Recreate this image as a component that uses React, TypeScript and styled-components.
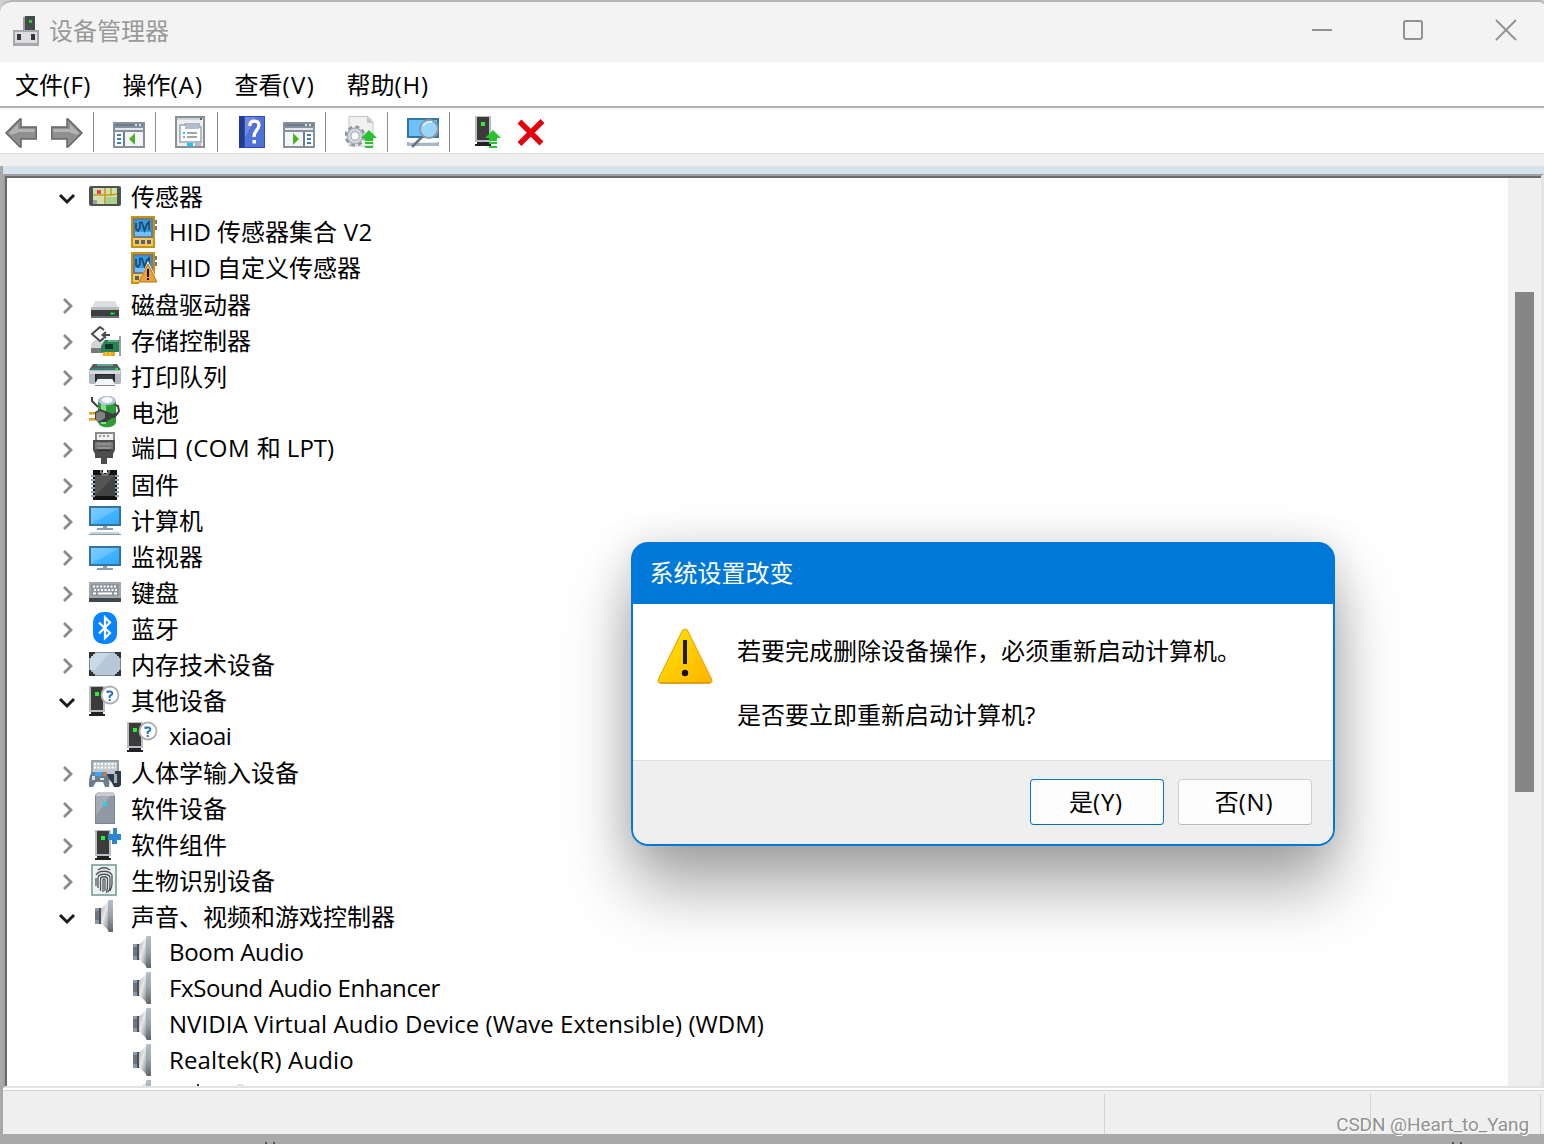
import React from "react";
import styled, { createGlobalStyle } from "styled-components";

const Global = createGlobalStyle`
  * { box-sizing: border-box; }
  html, body { margin: 0; padding: 0; background: #a9a9a9; }
  body {
    width: 1544px; height: 1144px; overflow: hidden;
    font-family: "Open Sans", "Noto Sans CJK SC", sans-serif;
    font-size: 24px; font-weight: 400; color: #000;
  }
  svg { display: block; }
`;

const Screen = styled.div`
  position: relative;
  width: 1544px;
  height: 1144px;
  overflow: hidden;
  background: #d0d0d0;
`;
const Window = styled.div`
  display: flex;
  flex-direction: column;
  height: 1144px;
  border-top: 2px solid #b5b5b5;
  border-radius: 12px 5px 0 0;
  background: #a9a9a9;
  overflow: hidden;
`;
const TitleBar = styled.header`
  display: flex;
  align-items: center;
  height: 60px;
  flex: none;
  padding: 0 27px 3px 10px;
  background: #f3f3f3;
`;
const Title = styled.h1`
  flex: 1;
  margin: 1px 0 0 7px;
  font-size: 24px;
  font-weight: 400;
  line-height: 34px;
  color: #999;
`;
const Controls = styled.div`
  display: flex;
  align-items: center;
  gap: 71px;
  margin-bottom: 1px;
  & > svg:last-child { margin-left: 1px; }
`;
const MenuBar = styled.nav`
  display: flex;
  height: 44px;
  flex: none;
  padding-left: 15px;
  background: #fff;
`;
const MenuItem = styled.div<{ $w: number; $ls: number }>`
  width: ${(p) => p.$w}px;
  line-height: 45px;
  white-space: nowrap;
  & > span { letter-spacing: ${(p) => p.$ls}px; }
`;
const ToolBar = styled.div`
  display: flex;
  align-items: flex-start;
  height: 48px;
  flex: none;
  padding: 8px 0 0 5px;
  border-top: 2px solid #b1b1b1;
  border-bottom: 1px solid #dcdcdc;
  background: linear-gradient(#f3f8fc 2px, #fff 2px);
`;
const Tool = styled.div`
  width: 32px;
  height: 32px;
  & + & { margin-left: 14px; }
`;
const Separator = styled.div`
  width: 1px;
  height: 40px;
  margin: -4px 19px 0 10px;
  background: #8d8d8d;
`;
const Band = styled.div<{ $h: number; $c: string }>`
  flex: none;
  height: ${(p) => p.$h}px;
  background: ${(p) => p.$c};
`;
const Frame = styled.div`
  display: flex;
  flex-direction: column;
  flex: none;
  height: 968px;
  margin-left: 3px;
  background: #fff;
`;
const Pane = styled.main`
  display: flex;
  flex: none;
  height: 914px;
  border: 2px solid #e3e3e3;
  border-top-color: #a0a0a0;
  border-left-color: #a0a0a0;
  border-right-width: 3px;
`;
const PaneInner = styled.div`
  display: flex;
  flex: 1;
  height: 910px;
  border: solid #696969;
  border-width: 2px 0 0 2px;
  overflow: hidden;
`;
const Tree = styled.div`
  flex: 1;
  background: #fff;
`;
const Scroll = styled.div`
  width: 33px;
  padding: 114px 7px 0;
  background: #efefef;
`;
const Thumb = styled.div`
  height: 500px;
  background: #858585;
`;
const Row = styled.div<{ $child?: boolean }>`
  display: flex;
  align-items: flex-start;
  height: 36px;
  padding-left: ${(p) => (p.$child ? 120 : 50)}px;
`;
const Arrow = styled.div`
  width: 20px;
  margin: 10px 12px 0 0;
`;
const IconBox = styled.div`
  width: 32px;
  height: 32px;
  margin-top: 2px;
`;
const Label = styled.div<{ $lower?: boolean }>`
  margin: ${(p) => (p.$lower ? 1 : 0)}px 0 0 10px;
  line-height: 36px;
  height: 35px;
  white-space: pre;
`;
const Latin = styled.span<{ $ls: number }>`
  letter-spacing: ${(p) => p.$ls}px;
`;
const ClippedText = styled.div`
  display: flex;
  gap: 38px;
  margin: 6px 0 0 38px;
  & > i { width: 2px; height: 2px; background: #333; }
  & > i + i { width: 7px; background: #f3dfe3; }
`;
const StatusBar = styled.footer`
  display: flex;
  flex: none;
  height: 44px;
  margin-top: 2px;
  padding-top: 3px;
  border-top: 1px solid #d5d5d5;
  background: #efefef;
`;
const StatusCell = styled.div<{ $w: number }>`
  width: ${(p) => p.$w}px;
  border-right: 1px solid #d3d3d3;
`;
const Below = styled.div`
  display: flex;
  flex: 1;
  justify-content: space-between;
  align-items: flex-end;
  padding: 0 82px 0 265px;
  & > i { width: 10px; height: 2px; border: solid #555; border-width: 0 2px; }
`;

const Dialog = styled.section`
  position: absolute;
  left: 631px;
  top: 542px;
  width: 704px;
  height: 304px;
  display: flex;
  flex-direction: column;
  border: 2px solid #0078d7;
  border-radius: 17px;
  background: linear-gradient(#0078d7 60px, #fff 60px, #fff 216px, #efefef 216px);
  overflow: hidden;
  box-shadow: 0 42px 66px rgba(0, 0, 0, 0.34), 0 0 42px rgba(0, 0, 0, 0.13);
`;
const DialogTitle = styled.h2`
  flex: none;
  height: 60px;
  margin: 0;
  padding-left: 16.5px;
  font-size: 24px;
  font-weight: 400;
  line-height: 58px;
  color: #fff;
  background: #0078d7;
`;
const DialogBody = styled.div`
  display: flex;
  flex: none;
  height: 156px;
  padding: 24px 0 0 24px;
`;
const Message = styled.div`
  margin-left: 24px;
  white-space: nowrap;
  & > p { margin: 6px 0 30px; line-height: 34px; }
`;
const DialogFooter = styled.div`
  display: flex;
  flex: 1;
  justify-content: flex-end;
  gap: 14px;
  padding: 18px 21px 0 0;
  border-top: 1px solid #dfdfdf;
  background: #efefef;
`;
const Button = styled.button<{ $primary?: boolean }>`
  width: 134px;
  height: 46px;
  padding: 0 2px 3px 0;
  font: inherit;
  color: #000;
  background: #fdfdfd;
  border: 1px solid ${(p) => (p.$primary ? "#0078d4" : "#d0d0d0")};
  border-bottom-color: ${(p) => (p.$primary ? "#006cbe" : "#bababa")};
  border-radius: 4px;
  & > span { letter-spacing: 0.8px; }
`;
const Watermark = styled.div`
  position: absolute;
  right: 15px;
  bottom: 7px;
  font-family: Roboto, "Liberation Sans", sans-serif;
  font-size: 19px;
  letter-spacing: -0.1px;
  line-height: 24px;
  white-space: nowrap;
  color: #929292;
  text-shadow: 1px 1px 0 #fff;
`;

const Svg = ({ children, s = 32 }: { children: React.ReactNode; s?: number }) => (
  <svg width={s} height={s} viewBox={`0 0 ${s} ${s}`}>{children}</svg>
);

const Tower = ({ x = 0 }: { x?: number }) => (
  <g transform={`translate(${x} 0)`}>
    <path d="M0 2h16v26H0z" fill="#b9bdc4" />
    <path d="M2 3h12v23H2z" fill="#3b3b3b" />
    <path d="M2 28h12v2h2v2H0v-2h2z" fill="#222" />
    <path d="M6 8h4v4H6z" fill="#27f22f" />
  </g>
);
const UpArrow = () => (
  <g fill="#27c22d">
    <path d="M24 14l8 8h-4v3h-8v-3h-4z" />
    <path d="M20 26h8v2h-8zM20 30h8v2h-8z" />
  </g>
);

const Screenful = ({ y }: { y: number }) => (
  <g transform={`translate(0 ${y})`}>
    <path d="M0 0h32v20H0z" fill="#35749f" />
    <path d="M2 2h28v16H2z" fill="url(#screen)" />
    <path d="M14 20h4v2h6v2H8v-2h6z" fill="#8b9db0" />
  </g>
);

const Gear = () => (
  <g>
    <circle cx="10" cy="20" r="9" fill="none" stroke="#8f959b" strokeWidth="3" strokeDasharray="4 3.07" />
    <circle cx="10" cy="20" r="6" fill="none" stroke="#9da3a9" strokeWidth="5" />
    <circle cx="10" cy="20" r="6" fill="none" stroke="#cfd5db" strokeWidth="3" />
    <circle cx="10" cy="20" r="3.400" fill="#fff" />
  </g>
);

const icons: Record<string, React.ReactNode> = {
  map: (
    <>
      <rect x="0" y="6" width="32" height="20" rx="2" fill="#505153" />
      <path d="M4 8h24v16H4z" fill="#cde2ae" />
      <path d="M17 17h11v7H17z" fill="#a9d08d" />
      <path d="M4 15h12l6 0 6-1M16 8v16M22 8v7" stroke="#c99d1e" strokeWidth="1.600" fill="none" />
      <path d="M8 10h4v4H8z" fill="#ef3f54" />
      <path d="M4 20h4v4H4z" fill="#9da49a" />
    </>
  ),
  sensor: (
    <>
      <path d="M4 0h24v32H4z" fill="#c39413" />
      <path d="M6 2h20v20H6z" fill="#6e7b86" />
      <path d="M8 4h16v16H8z" fill="#2e9ce8" />
      <path d="M8 16h16v4H8z" fill="#6ec1fb" />
      <path d="M9 7v6l2 2 2-3V6.500h2l2.500 8L20 8l2-2v8" stroke="#26415e" strokeWidth="1.600" fill="none" />
      <path d="M6 22h20v8H6z" fill="#fcc65a" />
      <path d="M8 24h4v4H8zM14 24h4v4h-4zM20 24h4v4h-4z" fill="#59616c" />
      <path d="M28 4h2v4h-2zM28 10h2v4h-2z" fill="#777" />
    </>
  ),
  disk: (
    <>
      <path d="M6 13h20l4 9H2z" fill="#dcdee0" />
      <path d="M2 19h28v4H2z" fill="#b7babd" />
      <path d="M2 22h28v8H2z" fill="#3c3f41" />
      <path d="M2 28h28v2H2z" fill="#6c7073" />
      <path d="M21 24h5v3h-5z" fill="#16922b" />
      <path d="M22 25h2v1h-2z" fill="#4cff50" />
    </>
  ),
  storage: (
    <>
      <path d="M2 20l4-4h18v12H2z" fill="#d3d5d8" />
      <path d="M2 24h14v5H2z" fill="#77797c" />
      <path d="M15 6l-4-3-8 7 8 7 4-3M14 11h7M17 8l-3.500 3 3.500 3" stroke="#47494b" strokeWidth="2" fill="none" />
      <path d="M16 16h14v12H12v-6z" fill="#2b8254" />
      <path d="M16 20h8v5h-8z" fill="#17322c" />
      <path d="M19 16h10v2H19z" fill="#59b18a" />
      <path d="M14 28h12v4H14z" fill="#f2a316" />
      <path d="M17 28v4M21 28v4" stroke="#ffd66a" />
      <path d="M30 12h2v20h-2z" fill="#9a9ea2" />
    </>
  ),
  printer: (
    <>
      <path d="M4 4h24l4 6H0z" fill="#555c62" />
      <path d="M8 4h16v2H8z" fill="#62a69b" />
      <path d="M3 8h26v2H3z" fill="#347f73" />
      <rect x="0" y="10" width="32" height="14" rx="2" fill="#b3b8bf" />
      <path d="M1 11h30v3H1z" fill="#d9dde2" />
      <path d="M26 8h3v2h-3z" fill="#20e132" />
      <path d="M6 14h20v8H6z" fill="#23272b" />
      <path d="M8 20l2-3h12l2 3 2 5H6z" fill="#f4f5f6" />
      <path d="M8 15h16v4H8z" fill="#3a3e42" />
      <path d="M6 25h20v1H6z" fill="#85898d" />
    </>
  ),
  battery: (
    <>
      <path d="M9 6c1-8 17-8 18 0v20c-1 7-17 7-18 0z" fill="#2c9c37" />
      <path d="M12 8h5v20h-5z" fill="#8ada8c" />
      <ellipse cx="18" cy="4.500" rx="9" ry="4.500" fill="#bcc3e0" />
      <ellipse cx="18" cy="4" rx="5.500" ry="3" fill="#fafbff" />
      <path d="M3 1v4l6 6M20 21h4c3 0 4-3 6-6l-1-5-3-1" stroke="#3e3f40" strokeWidth="2" fill="none" />
      <path d="M0 16h7v2.500H0zM0 22h7v2.500H0z" fill="#dba016" />
      <path d="M6 16l5-3 8 3 5 2 3-3v5l-4 2-6 4H9l-3-3z" fill="#3c3d3f" />
      <path d="M7 17l4-2 5 2v5l-5 3H7z" fill="#828385" />
    </>
  ),
  usb: (
    <>
      <path d="M6 0h20v9H6z" fill="#8b8b8b" />
      <path d="M8 2h16v7H8z" fill="#f1f1f1" />
      <path d="M10 3h2v2h-2zM14 3h2v2h-2zM18 3h2v2h-2z" fill="#999" />
      <path d="M4 8h22v10l-2 4v4h-6v6h-6v-6H6v-4l-2-4z" fill="#4d4d4d" />
      <path d="M6 10h18v7H6z" fill="#777" />
      <path d="M8 12h14M8 16h14" stroke="#a6a6a6" />
      <path d="M8 18h14v1H8z" fill="#2c2c2c" />
    </>
  ),
  chip: (
    <>
      <path d="M4 2h24v30H4z" fill="#111" />
      <path d="M6 7h20v21H6z" fill="#555" />
      <path d="M6 28L26 7v21z" fill="#434343" />
      <path d="M11 2h2v2h2v2h2V4h2V2h2v3l-3 3h-4l-3-3z" fill="#777" />
      <path d="M14 2h4v3h-4z" fill="#fff" />
      <path d="M4 7v23M28 7v23" stroke="#8fa0b3" strokeWidth="4" strokeDasharray="2 2" />
    </>
  ),
  computer: (
    <>
      <Screenful y={2} />
      <path d="M2 28h28l2 3H0z" fill="#c9d3dc" />
      <path d="M0 30h32v1H0z" fill="#8498a8" />
    </>
  ),
  monitor: <Screenful y={6} />,
  keyboard: (
    <>
      <path d="M0 6h32v17H0z" fill="#a0a8b0" />
      <path d="M2 8h28v12H2z" fill="#8e969d" />
      <path d="M4 10.500h24" stroke="#fff" strokeWidth="2" strokeDasharray="2 1.500" />
      <path d="M5 14h23" stroke="#fff" strokeWidth="2" strokeDasharray="2 1.500" />
      <path d="M4 17.500h3M9 17.500h14M25 17.500h3" stroke="#fff" strokeWidth="2" />
      <path d="M0 22h32v4H0z" fill="#3f464c" />
    </>
  ),
  bluetooth: (
    <>
      <rect x="4" y="0" width="24" height="32" rx="10" fill="#0a84ff" />
      <path d="M10 10.500l11 10.500-5 5V5.500l5 5L10 21.500" fill="none" stroke="#fff" strokeWidth="2.200" />
    </>
  ),
  memory: (
    <>
      <rect x="0" y="4" width="32" height="24" rx="2" fill="#7d8c9b" />
      <path d="M5 5h22c0 2 2 4 4 4v14c-2 0-4 2-4 4H5c0-2-2-4-4-4V9c2 0 4-2 4-4z" fill="#b7c9d8" />
      <path d="M5 5h15L6 22H1V9c2 0 4-2 4-4z" fill="#c9d9e6" />
      <path d="M0 4h6v2H4v2H2v2H0zM26 4h6v6h-2V8h-2V6h-2zM0 22h2v2h2v2h2v2H0zM32 22v6h-6v-2h2v-2h2v-2z" fill="#303234" />
    </>
  ),
  unknown: (
    <>
      <Tower />
      <circle cx="21" cy="11" r="8.500" fill="#fff" stroke="#b0b0b0" strokeWidth="1.800" />
      <path d="M18.500 9V7.500h2.500c3 0 3 3 .5 4l-.8.600V14M20.700 15v2" fill="none" stroke="#2474bd" strokeWidth="2" />
    </>
  ),
  hid: (
    <>
      <path d="M2 4h28v16H2z" fill="#9aa2aa" />
      <path d="M4 6h24v12H4z" fill="#c3c8cd" />
      <path d="M5 8h22M5 11.500h22" stroke="#fff" strokeWidth="2" strokeDasharray="2 1.500" />
      <path d="M3 16h14c3 3 4 8 3 15h-4l-2-5H7l-3 5H0c0-7 0-11 3-15z" fill="#6c7d8c" />
      <path d="M6 16h7v4H6z" fill="#39aaff" />
      <path d="M14 17h3v3h-3z" fill="#ef6a3c" />
      <path d="M3 20h3v4H3zM11 22h4v2h-4z" fill="#d9e1e8" />
      <path d="M18 18h8v-3h6v14l-2 2h-5l-2-4-3-4z" fill="#2f3b46" />
      <path d="M25 18h3v9h-3z" fill="#a6b1bb" />
    </>
  ),
  software: (
    <>
      <path d="M9 0h14l3 3v29H6V3z" fill="#7b8590" />
      <path d="M9 0h14l3 4H6z" fill="#c6ccd2" />
      <path d="M7 4h18v27H7z" fill="#8f99a3" />
      <path d="M7 4h14L7 24z" fill="#a3acb5" />
      <path d="M14 10h4v4h-4z" fill="#25d6e5" />
    </>
  ),
  component: (
    <>
      <Tower x={6} />
      <path d="M24 0h4v6h4v6h-4v4h-5v-4h-4V6h5z" fill="#2c86d1" />
    </>
  ),
  finger: (
    <>
      <path d="M2 0h26v32H2z" fill="#8fb2a8" />
      <path d="M4 2h22v28H4z" fill="#f0f2f2" />
      <g fill="none" stroke="#4b5357" strokeWidth="1.300">
        <path d="M9 6c4-3 8-3 12 0M7 11c3-5 13-5 16 0v9c0 3-1 5-2 7M7 14v8M9 24V14c0-5 12-5 12 0v6c0 4-1 7-2 8M11.500 27V15c0-3 7-3 7 0v7c0 3-.5 5-1 7M14 28V16c0-1.500 2-1.500 2 0v11" />
      </g>
    </>
  ),
  speaker: (
    <>
      <path d="M6 8h7v16H6z" fill="#8a98a8" />
      <path d="M6 11h5v9H6z" fill="#6b7580" />
      <path d="M10 8h2v16h-2z" fill="#4a535b" />
      <path d="M12 9l8-8v30l-8-8z" fill="url(#cone)" />
      <path d="M19 1l1-1h4v32h-4l-1-1z" fill="url(#rim)" />
    </>
  ),
};
icons.sensorWarn = (
  <>
    {icons.sensor}
    <path d="M21 9l10 21v2H12v-2z" fill="#fff" />
    <path d="M21 12l9 18H12z" fill="#eda22b" stroke="#b57a21" strokeWidth="1" />
    <path d="M20 17h2v8h-2zM20 26h2v2h-2z" fill="#111" />
  </>
);

type Part = [string, number?];
type TreeItem = { icon: string; open?: boolean; child?: boolean; parts: Part[] };
const nodes: TreeItem[] = [
  { icon: "map", open: true, parts: [["传感器"]] },
  { icon: "sensor", child: true, parts: [["HID ", 0], ["传感器集合"], [" V2", 0.5]] },
  { icon: "sensorWarn", child: true, parts: [["HID ", 0], ["自定义传感器"]] },
  { icon: "disk", parts: [["磁盘驱动器"]] },
  { icon: "storage", parts: [["存储控制器"]] },
  { icon: "printer", parts: [["打印队列"]] },
  { icon: "battery", parts: [["电池"]] },
  { icon: "usb", parts: [["端口"], [" (COM ", 0.45], ["和"], [" LPT)", 0]] },
  { icon: "chip", parts: [["固件"]] },
  { icon: "computer", parts: [["计算机"]] },
  { icon: "monitor", parts: [["监视器"]] },
  { icon: "keyboard", parts: [["键盘"]] },
  { icon: "bluetooth", parts: [["蓝牙"]] },
  { icon: "memory", parts: [["内存技术设备"]] },
  { icon: "unknown", open: true, parts: [["其他设备"]] },
  { icon: "unknown", child: true, parts: [["xiaoai", -0.6]] },
  { icon: "hid", parts: [["人体学输入设备"]] },
  { icon: "software", parts: [["软件设备"]] },
  { icon: "component", parts: [["软件组件"]] },
  { icon: "finger", parts: [["生物识别设备"]] },
  { icon: "speaker", open: true, parts: [["声音、视频和游戏控制器"]] },
  { icon: "speaker", child: true, parts: [["Boom Audio", -0.32]] },
  { icon: "speaker", child: true, parts: [["FxSound Audio Enhancer", -0.4]] },
  { icon: "speaker", child: true, parts: [["NVIDIA Virtual Audio Device (Wave Extensible) (WDM)", 0.05]] },
  { icon: "speaker", child: true, parts: [["Realtek(R) Audio", 0.14]] },
];

const Chevron = ({ open }: { open?: boolean }) => (
  <svg width="20" height="20" viewBox="0 0 20 20">
    {open ? (
      <path d="M3 7l7 7 7-7" fill="none" stroke="#1b1b1b" strokeWidth="3" />
    ) : (
      <path d="M7 3l7 7-7 7" fill="none" stroke="#8a8a8a" strokeWidth="2.800" />
    )}
  </svg>
);

const ArrowShape = () => (
  <>
    <path d="M1 17L15 3h1v8h15.500v12H16v8h-1z" fill="#8f8f8f" stroke="#666" strokeWidth="1.500" />
    <path d="M4 17L13 8v5h16.500v3H14l-8 3z" fill="#b4b4b4" />
  </>
);

const Panel = ({ flip }: { flip?: boolean }) => (
  <>
    <path d="M0 6h32v26H0z" fill="#87919b" />
    <path d="M2 8h28v2H2z" fill="#6a7c92" />
    <path d="M22 8h2v2h-2zM26 8h2v2h-2z" fill="#dfe6ee" />
    <path d="M2 12h28v2H2z" fill="#e3e7eb" />
    <path d="M2 16h28v14H2z" fill="#f4f5f6" />
    <g transform={flip ? "matrix(-1 0 0 1 32 0)" : undefined}>
      <path d="M10 16h2v14h-2z" fill="#6c7f96" />
      <path d="M2 16h8v14H2z" fill="#fff" />
      <path d="M4 18h4v2H4zM4 22h4v2H4zM4 26h4v2H4z" fill="#3e7cc2" />
      <path d="M16 23l6-6v12z" fill="#4cb41f" />
    </g>
  </>
);

const GradientStore = styled.svg`
  position: absolute;
`;
const Gradients = () => (
  <GradientStore width="0" height="0">
    <defs>
      <linearGradient id="cone" x1="0" y1="0" x2="1" y2="1">
        <stop offset="0" stopColor="#a9abad" />
        <stop offset=".45" stopColor="#e9e9e9" />
        <stop offset="1" stopColor="#76797c" />
      </linearGradient>
      <linearGradient id="rim" x1="0" y1="0" x2="0" y2="1">
        <stop offset="0" stopColor="#b4bfcd" />
        <stop offset=".5" stopColor="#9ba1a8" />
        <stop offset="1" stopColor="#5f666d" />
      </linearGradient>
      <linearGradient id="screen" x1="0" y1="0" x2="1" y2="1">
        <stop offset="0" stopColor="#7ccbff" />
        <stop offset=".45" stopColor="#69c2ff" />
        <stop offset=".55" stopColor="#42b3ff" />
        <stop offset="1" stopColor="#2ea9fc" />
      </linearGradient>
      <linearGradient id="warn" x1="0" y1="0" x2="1" y2="1">
        <stop offset="0" stopColor="#ffe600" />
        <stop offset="1" stopColor="#ffb300" />
      </linearGradient>
    </defs>
  </GradientStore>
);

export default function App() {
  return (
    <Screen lang="zh-CN">
      <Global />
      <Gradients />
      <Window>
        <TitleBar>
          <Svg>
            <path d="M15 1h10v16H13z" fill="#444b4b" />
            <path d="M13 2h2v14h-2z" fill="#9a9f9f" />
            <path d="M19 5h3v3h-3z" fill="#3ec43a" />
            <path d="M3 15h26v16H3z" fill="#a9a9ad" />
            <path d="M5 17h22v11H5z" fill="#dcdce1" />
            <path d="M7 19h4v6H7zM21 19h4v6h-4z" fill="#35383c" />
          </Svg>
          <Title>设备管理器</Title>
          <Controls>
            <Svg s={20}><path d="M0 10h20" stroke="#929292" strokeWidth="2" /></Svg>
            <Svg s={20}><rect x="1" y="1" width="18" height="18" rx="2" fill="none" stroke="#929292" strokeWidth="2" /></Svg>
            <Svg s={22}><path d="M1 1l20 20M21 1L1 21" stroke="#929292" strokeWidth="1.800" /></Svg>
          </Controls>
        </TitleBar>
        <MenuBar>
          <MenuItem $w={107.5} $ls={0.4}>文件<span>(F)</span></MenuItem>
          <MenuItem $w={112} $ls={1.1}>操作<span>(A)</span></MenuItem>
          <MenuItem $w={112} $ls={1.4}>查看<span>(V)</span></MenuItem>
          <MenuItem $w={112} $ls={0.9}>帮助<span>(H)</span></MenuItem>
        </MenuBar>
        <ToolBar>
          <Tool><Svg><ArrowShape /></Svg></Tool>
          <Tool><Svg><g transform="matrix(-1 0 0 1 32 0)"><ArrowShape /></g></Svg></Tool>
          <Separator />
          <Tool><Svg><Panel /></Svg></Tool>
          <Separator />
          <Tool>
            <Svg>
              <path d="M0 0h30v32H0z" fill="#8b9096" />
              <path d="M2 4h26v26H2z" fill="#eceef0" />
              <path d="M2 2h26v2H2z" fill="#cfd5db" />
              <path d="M25 2h2v2h-2z" fill="#4d6485" />
              <path d="M5 9h5V8h14v3h2v15H5z" fill="#fff" stroke="#9aa5b4" strokeWidth="1.500" />
              <path d="M10 9h14v4H10z" fill="#b4bdca" />
              <path d="M8 16h2v2H8z" fill="#13c5f5" />
              <path d="M12 16h10v2H12zM12 20h10v2H12zM8 20h2v2H8z" fill="#a1a7a8" />
              <path d="M12 27h6v3h-6z" fill="#19c6f7" />
              <path d="M20 27h6v3h-6z" fill="#b9bcbf" />
            </Svg>
          </Tool>
          <Separator />
          <Tool>
            <Svg>
              <path d="M2 0h26v32H2z" fill="#2850b8" />
              <path d="M8 1h19v30H8z" fill="#5271d6" />
              <path d="M8 1h11L8 22z" fill="#7189df" />
              <path d="M2 0h5v32H2z" fill="#223c8f" />
              <path d="M13 10V8c1-4 9-4 9 1 0 5-5 5-5 12" fill="none" stroke="#fff" strokeWidth="3.200" />
              <path d="M15.500 24h3.500v3.500h-3.500z" fill="#fff" />
            </Svg>
          </Tool>
          <Tool><Svg><Panel flip /></Svg></Tool>
          <Separator />
          <Tool>
            <Svg>
              <path d="M4 .5h19l5 5V30H4z" fill="#f1f1f1" stroke="#c3c3c3" />
              <path d="M22 0v7h6z" fill="#c6c6c6" />
              <Gear />
              <UpArrow />
            </Svg>
          </Tool>
          <Separator />
          <Tool>
            <Svg>
              <path d="M0 2h32v20H0z" fill="#3577a3" />
              <path d="M2 4h28v16H2z" fill="#6dc0fb" />
              <path d="M0 26h32v4H0z" fill="#a9b7c5" />
              <path d="M2 26h28v1H2z" fill="#e2e8ee" />
              <path d="M15 21L5 31" stroke="#69747e" strokeWidth="2.500" />
              <circle cx="22" cy="13" r="9" fill="#9bd5fa" stroke="#8798a5" strokeWidth="2" />
              <path d="M16 10a8 8 0 0 1 9-4" stroke="#d6effe" strokeWidth="2" fill="none" />
            </Svg>
          </Tool>
          <Separator />
          <Tool>
            <Svg>
              <g transform="translate(0 -2)"><Tower x={6} /></g>
              <UpArrow />
            </Svg>
          </Tool>
          <Tool>
            <Svg>
              <path d="M4.500 5.500l22 22M27.500 5L4.500 28" stroke="#e3000f" strokeWidth="5.500" fill="none" />
            </Svg>
          </Tool>
        </ToolBar>
        <Band $h={12} $c="#efefef" />
        <Frame>
          <Band $h={8} $c="#d6e3ef" />
          <Pane>
            <PaneInner>
              <Tree>
                {nodes.map((n, i) => (
                  <Row key={i} $child={n.child}>
                    {!n.child && <Arrow><Chevron open={n.open} /></Arrow>}
                    <IconBox><Svg>{icons[n.icon]}</Svg></IconBox>
                    <Label $lower={n.parts.every(([, ls]) => ls === undefined)}>
                      {n.parts.map(([t, ls], j) =>
                        ls === undefined ? t : <Latin key={j} $ls={ls}>{t}</Latin>
                      )}
                    </Label>
                  </Row>
                ))}
                <Row $child>
                  <IconBox><Svg>{icons.speaker}</Svg></IconBox>
                  <ClippedText><i /><i /></ClippedText>
                </Row>
              </Tree>
              <Scroll><Thumb /></Scroll>
            </PaneInner>
          </Pane>
          <StatusBar>
            <StatusCell $w={1102} />
            <StatusCell $w={266} />
            <StatusCell $w={170} />
          </StatusBar>
        </Frame>
        <Below><i /><i /></Below>
      </Window>
      <Dialog>
        <DialogTitle>系统设置改变</DialogTitle>
        <DialogBody>
          <svg width="56" height="56" viewBox="0 0 56 56">
            <path d="M25.500 2.500q2.500-3 5 0L54.500 51q1.500 4-2.500 4H4q-4 0-2.500-4z" fill="url(#warn)" stroke="#eda90c" strokeWidth="1.200" strokeLinejoin="round" />
            <path d="M3 55h50" stroke="#dd930c" strokeWidth="1.600" />
            <path d="M26 12h4v24h-4z" fill="#1f1c10" />
            <circle cx="28" cy="45" r="3.200" fill="#111" />
          </svg>
          <Message>
            <p>若要完成删除设备操作，必须重新启动计算机。</p>
            <p>是否要立即重新启动计算机?</p>
          </Message>
        </DialogBody>
        <DialogFooter>
          <Button $primary>是<span>(Y)</span></Button>
          <Button>否<span>(N)</span></Button>
        </DialogFooter>
      </Dialog>
      <Watermark>CSDN @Heart_to_Yang</Watermark>
    </Screen>
  );
}
